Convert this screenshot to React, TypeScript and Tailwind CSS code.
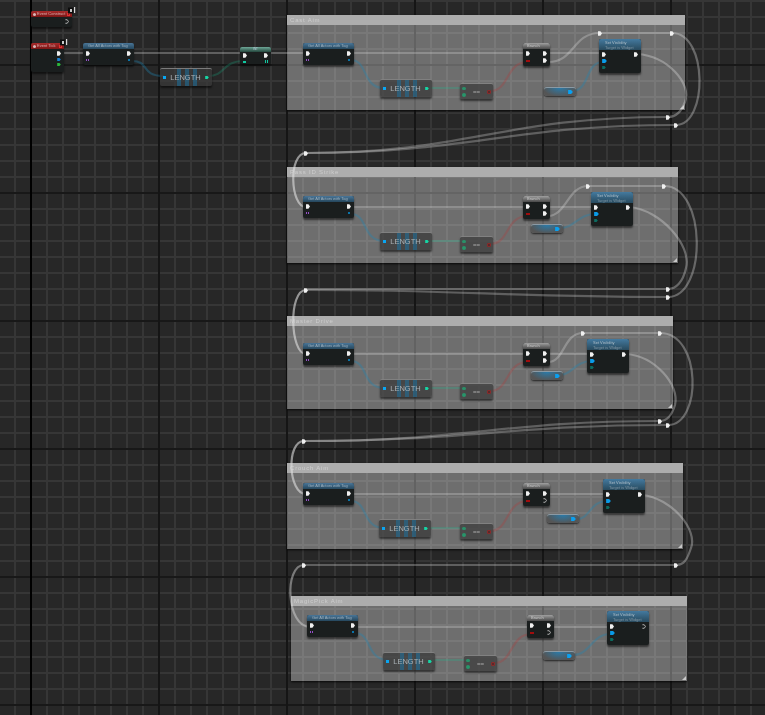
import React from "react";

const font = "font-['Liberation_Sans',Arial,sans-serif]";

function Exec({ hollow }: { hollow?: boolean }) {
  return (
    <svg width="4" height="5" viewBox="0 0 5 6" className="block shrink-0">
      {hollow ? (
        <path d="M0.5 0.8H2.8L4.3 3L2.8 5.2H0.5" fill="none" stroke="#cfcfcf" strokeWidth="1" />
      ) : (
        <path d="M0 0.3H3L5 3L3 5.7H0Z" fill="#f0f0f0" />
      )}
    </svg>
  );
}

function Arrow({ color, size = 5 }: { color: string; size?: number }) {
  return (
    <svg width={size + 1} height={size} viewBox="0 0 6 5" className="block shrink-0">
      <path d="M0 0H3.8L6 2.5L3.8 5H0Z" fill={color} />
    </svg>
  );
}

function Comment({ x, y, w, h, title }: { x: number; y: number; w: number; h: number; title: string }) {
  return (
    <div
      className={`absolute flex flex-col bg-white/[0.33] shadow-[0_1px_2px_rgba(0,0,0,0.8)] ${font}`}
      style={{ left: x, top: y, width: w, height: h }}
    >
      <div className="flex h-[10px] shrink-0 items-center bg-[#adadad] pl-[3px] text-[6px] leading-none tracking-[0.8px] text-[#cdcdcd]">
        {title}
      </div>
      <div className="absolute bottom-[1px] right-[1px] h-0 w-0 border-b-[4px] border-l-[4px] border-b-[#c8c8c8] border-l-transparent" />
    </div>
  );
}

function Box({ x, y, w, h, className, children }: { x: number; y: number; w: number; h: number; className: string; children?: React.ReactNode }) {
  return (
    <div className={`absolute overflow-hidden rounded-[2px] ${font} ${className}`} style={{ left: x, top: y, width: w, height: h }}>
      {children}
    </div>
  );
}

const dark = "bg-[#1a1e1e] shadow-[0_2px_2px_rgba(0,0,0,0.55)]";

function GetAll({ x, y }: { x: number; y: number }) {
  return (
    <Box x={x} y={y} w={51} h={22} className={dark}>
      <div className="flex h-[6px] items-center bg-gradient-to-b from-[#4a7698] to-[#25475d] pl-[5px] text-[4px] leading-none text-[#9fb2bf]">
        Get All Actors with Tag
      </div>
      <div className="flex items-center justify-between px-[3px] pt-[2px]">
        <Exec />
        <Exec />
      </div>
      <div className="flex items-center justify-between px-[3px] pt-[3px]">
        <div className="flex gap-[1px]">
          <div className="h-[2px] w-[1px] bg-[#9550c8]" />
          <div className="h-[2px] w-[1px] bg-[#9550c8]" />
        </div>
        <div className="mr-[1px] h-[2px] w-[2px] bg-[#0b73a8]" />
      </div>
    </Box>
  );
}

function Length({ x, y }: { x: number; y: number }) {
  return (
    <Box x={x} y={y} w={52} h={18} className="border-t border-t-[#9a9a9a]/70 bg-[#3a3a3a]/75 shadow-[0_2px_2px_rgba(0,0,0,0.55)]">
      <div className="absolute left-[17px] top-0 flex h-full gap-[4px]">
        <div className="h-full w-[4px] bg-[#1f6c96]/60" />
        <div className="h-full w-[4px] bg-[#1f6c96]/60" />
        <div className="h-full w-[4px] bg-[#1f6c96]/60" />
      </div>
      <div className="absolute inset-0 flex items-center justify-between px-[3px]">
        <div className="h-[3px] w-[3px] bg-[#0aa6f2]" />
        <div className="text-[7.5px] leading-none text-[#a9b1b5]">LENGTH</div>
        <Arrow color="#16d6a5" size={3} />
      </div>
    </Box>
  );
}

function Equal({ x, y }: { x: number; y: number }) {
  return (
    <Box x={x} y={y} w={33} h={16} className="border-t border-t-[#9a9a9a]/70 bg-[#404040]/80 shadow-[0_2px_2px_rgba(0,0,0,0.55)]">
      <div className="flex h-full items-center justify-between px-[2px]">
        <div className="flex flex-col gap-[3px]">
          <div className="h-[3px] w-[4px] rounded-full bg-[#2a8f68]" />
          <div className="h-[4px] w-[4px] rounded-full bg-[#28956a]" />
        </div>
        <div className="text-[6px] font-bold leading-none text-[#a8a8a8]">==</div>
        <div className="h-[4px] w-[4px] rounded-[1px] border border-[#8a2a2a] bg-[#5a2a2a]" />
      </div>
    </Box>
  );
}

function Branch({ x, y, hollow }: { x: number; y: number; hollow?: boolean }) {
  return (
    <Box x={x} y={y} w={27} h={23} className={dark}>
      <div className="flex h-[6px] items-center bg-gradient-to-b from-[#a0a0a0] to-[#4a4a4a] pl-[4px] text-[4px] leading-none text-[#c8c8c8]">
        Branch
      </div>
      <div className="flex items-center justify-between px-[3px] pt-[2px]">
        <Exec />
        <Exec />
      </div>
      <div className="flex items-center justify-between px-[3px] pt-[2px]">
        <div className="h-[2px] w-[4px] bg-[#a00d0d]" />
        <Exec hollow={hollow} />
      </div>
    </Box>
  );
}

function SetVis({ x, y, hollow }: { x: number; y: number; hollow?: boolean }) {
  return (
    <Box x={x} y={y} w={42} h={34} className={dark}>
      <div className="flex h-[11px] flex-col justify-center bg-gradient-to-b from-[#447a9f] to-[#284a5e] pl-[6px] text-[4px] leading-[5px] text-[#aebec8]">
        <div>Set Visibility</div>
        <div className="text-[#7f95a3]">Target is Widget</div>
      </div>
      <div className="flex items-center justify-between px-[3px] pt-[2px]">
        <Exec />
        <Exec hollow={hollow} />
      </div>
      <div className="px-[3px] pt-[2px]">
        <Arrow color="#0a9be8" size={4} />
      </div>
      <div className="px-[3px] pt-[3px]">
        <Arrow color="#0c6b60" size={3} />
      </div>
    </Box>
  );
}

function Var({ x, y }: { x: number; y: number }) {
  return (
    <Box x={x} y={y} w={32} h={9} className="rounded-[3px] border-t border-t-[#8a9aa5] bg-[radial-gradient(ellipse_at_50%_0%,#2b7aa8,#555_75%)] shadow-[0_1px_2px_rgba(0,0,0,0.7)]">
      <div className="flex h-full items-center justify-end pr-[3px]">
        <Arrow color="#0aa0f0" size={4} />
      </div>
    </Box>
  );
}

function Knot({ x, y }: { x: number; y: number }) {
  return (
    <div className="absolute" style={{ left: x - 2, top: y - 2.5 }}>
      <Exec />
    </div>
  );
}

function EventNode({ x, y, w, h, title, children }: { x: number; y: number; w: number; h: number; title: string; children: React.ReactNode }) {
  return (
    <>
      <Box x={x} y={y} w={w} h={h} className={dark}>
        <div className="flex h-[6px] items-center gap-[1px] bg-gradient-to-b from-[#a82a2a] to-[#7c1616] pl-[2px] text-[4px] leading-none text-[#d4b0b0]">
          <span className="h-[3px] w-[3px] rounded-full bg-[#d8b8b8]" />
          {title}
        </div>
        {children}
      </Box>
      <div className="absolute h-[3px] w-[3px] border-[0.7px] border-[#e03030]" style={{ left: x + w - 5, top: y + 2 }} />
      <svg className="absolute" width="8" height="7" viewBox="0 0 8 7" style={{ left: x + w - 4, top: y - 4 }}>
        <rect x="0" y="0.5" width="5" height="6" fill="#0c0c0c" />
        <rect x="6" y="0" width="1.2" height="6" fill="#d8d8d8" />
        <rect x="2" y="2" width="2" height="3" fill="#c8c8c8" />
      </svg>
    </>
  );
}

const white = "#e0e0e0";

type W = { d: string; c?: string; o?: number };

const blue = "#1f86b4";
const green = "#12c898";
const red = "#c03030";

const wires: W[] = [
  { d: "M62 53H83", o: 0.3 },
  { d: "M132 53H241", o: 0.3 },
  { d: "M270 53H304", o: 0.3 },
  { d: "M132 61C150 61 140 76 164 76", c: blue, o: 0.35 },
  { d: "M208 76C226 76 222 61 244 61", c: green, o: 0.22 },
  // section 1
  { d: "M352 53H526", o: 0.28 },
  { d: "M548 53H602", o: 0.28 },
  { d: "M548 62C575 62 572 33 600 33", o: 0.3 },
  { d: "M600 33H672", o: 0.3 },
  { d: "M672 33C708 33 708 125 676 125", o: 0.35 },
  { d: "M637 54C668 56 692 84 685 102C681 113 675 117 668 117", o: 0.35 },
  { d: "M668 117C500 117 470 153 306 153", o: 0.3 },
  { d: "M676 125C510 125 470 153 306 153", o: 0.3 },
  { d: "M306 153C288 153 290 207 306 207", o: 0.6 },
  { d: "M351 60C368 60 362 88 384 88", c: blue, o: 0.35 },
  { d: "M426 88H464", c: green, o: 0.22 },
  { d: "M490 91C510 91 505 62 528 62", c: red, o: 0.25 },
  { d: "M572 91C590 91 585 62 603 62", c: blue, o: 0.35 },
  // section 2
  { d: "M352 207H526", o: 0.28 },
  { d: "M548 207H595", o: 0.28 },
  { d: "M548 216C566 216 568 186 588 186", o: 0.3 },
  { d: "M588 186H664", o: 0.3 },
  { d: "M664 186C707 186 707 297 668 297", o: 0.35 },
  { d: "M630 207C660 210 692 245 686 268C683 282 676 289 668 289", o: 0.35 },
  { d: "M668 289H306", o: 0.3 },
  { d: "M668 297C500 297 470 290 306 290", o: 0.3 },
  { d: "M306 290C288 290 290 354 306 354", o: 0.6 },
  { d: "M351 214C368 214 362 241 384 241", c: blue, o: 0.35 },
  { d: "M426 241H464", c: green, o: 0.22 },
  { d: "M490 244C510 244 505 216 528 216", c: red, o: 0.25 },
  { d: "M560 228C575 228 578 214 596 214", c: blue, o: 0.35 },
  // section 3
  { d: "M352 354H526", o: 0.28 },
  { d: "M548 354H590", o: 0.28 },
  { d: "M548 362C565 362 563 333 583 333", o: 0.3 },
  { d: "M583 333H660", o: 0.3 },
  { d: "M660 333C702 333 702 425 668 425", o: 0.35 },
  { d: "M626 354C655 356 680 385 675 405C672 415 668 421 660 421", o: 0.35 },
  { d: "M660 421C500 421 470 441 304 441", o: 0.3 },
  { d: "M668 425C510 425 470 441 304 441", o: 0.3 },
  { d: "M304 441C286 441 288 494 306 494", o: 0.6 },
  { d: "M351 361C368 361 362 388 384 388", c: blue, o: 0.35 },
  { d: "M426 388H464", c: green, o: 0.22 },
  { d: "M490 391C510 391 505 362 528 362", c: red, o: 0.25 },
  { d: "M560 375C572 375 575 361 592 361", c: blue, o: 0.35 },
  // section 4
  { d: "M352 494H526", o: 0.28 },
  { d: "M548 494H606", o: 0.28 },
  { d: "M642 495C672 498 698 530 691 548C687 560 684 565 676 565", o: 0.35 },
  { d: "M676 565H304", o: 0.3 },
  { d: "M304 565C284 565 286 627 310 627", o: 0.45 },
  { d: "M351 501C368 501 362 528 384 528", c: blue, o: 0.35 },
  { d: "M426 528H464", c: green, o: 0.22 },
  { d: "M490 531C510 531 505 501 528 501", c: red, o: 0.25 },
  { d: "M577 519C590 519 590 501 607 501", c: blue, o: 0.35 },
  // section 5
  { d: "M356 627H530", o: 0.28 },
  { d: "M552 627H610", o: 0.28 },
  { d: "M355 633C372 633 366 660 388 660", c: blue, o: 0.35 },
  { d: "M430 660H468", c: green, o: 0.22 },
  { d: "M494 663C514 663 509 634 532 634", c: red, o: 0.25 },
  { d: "M573 655C590 655 592 634 610 634", c: blue, o: 0.35 },
];

const knots: [number, number][] = [
  [600, 33], [672, 33], [668, 117], [676, 125], [306, 153],
  [588, 186], [664, 186], [668, 289], [668, 297], [306, 290],
  [583, 333], [660, 333], [660, 421], [668, 425], [304, 441],
  [676, 565], [304, 565],
];

export default function App() {
  return (
    <div className="relative h-[715px] w-[765px] overflow-hidden bg-[#262626]">
      <div className="absolute inset-0 blur-[0.35px] bg-[#272727] bg-[linear-gradient(90deg,#151515_2px,transparent_2px),linear-gradient(0deg,#181818_2px,transparent_2px),linear-gradient(90deg,#363636_2px,transparent_2px),linear-gradient(0deg,#363636_2px,transparent_2px)] [background-position:158px_0,0_66px,14px_0,0_2px] [background-size:128px_128px,128px_128px,16px_16px,16px_16px]">
        <div className="absolute left-[30px] top-0 h-full w-[2px] bg-black" />

        <Comment x={287} y={15} w={398} h={95} title="Cast Aim" />
        <Comment x={287} y={167} w={391} h={96} title="Pass ID Strike" />
        <Comment x={287} y={316} w={386} h={93} title="Master Drive" />
        <Comment x={287} y={463} w={396} h={86} title="Crouch Aim" />
        <Comment x={291} y={596} w={396} h={85} title="MagicPick Aim" />

        <svg className="absolute left-0 top-0" width="765" height="715" viewBox="0 0 765 715" fill="none">
          {wires.map((w, i) => (
            <path key={i} d={w.d} stroke={w.c ?? white} strokeOpacity={w.o ?? 0.35} strokeWidth="2.2" />
          ))}
        </svg>

        <EventNode x={31} y={11} w={41} h={16} title="Event Construct">
          <div className="flex justify-end pr-[3px] pt-[2px]">
            <Exec hollow />
          </div>
        </EventNode>
        <EventNode x={31} y={43} w={33} h={29} title="Event Tick">
          <div className="flex flex-col items-end gap-[2px] pr-[3px] pt-[2px]">
            <Exec />
            <Arrow color="#1a7fd0" size={3} />
            <Arrow color="#2ab83a" size={3} />
          </div>
        </EventNode>
        <GetAll x={83} y={43} />
        <Length x={160} y={68} />
        <Box x={240} y={47} w={31} h={17} className={dark}>
          <div className="flex h-[5px] items-center justify-center bg-gradient-to-b from-[#6fa898] to-[#24483e] text-[3px] leading-none text-[#bcd]">
            INT
          </div>
          <div className="flex items-center justify-between px-[3px] pt-[1px]">
            <Exec />
            <Exec />
          </div>
          <div className="flex items-center justify-between px-[3px] pt-[2px]">
            <div className="h-[2px] w-[3px] bg-[#10c8a0]" />
            <div className="flex gap-[1px]">
              <div className="h-[3px] w-[1px] bg-[#10c8a0]" />
              <div className="h-[3px] w-[1px] bg-[#10c8a0]" />
            </div>
          </div>
        </Box>

        <GetAll x={303} y={43} />
        <Length x={380} y={79} />
        <Equal x={460} y={83} />
        <Branch x={523} y={43} />
        <SetVis x={599} y={39} />
        <Var x={544} y={87} />

        <GetAll x={303} y={196} />
        <Length x={380} y={232} />
        <Equal x={460} y={236} />
        <Branch x={523} y={196} />
        <SetVis x={591} y={192} />
        <Var x={531} y={224} />

        <GetAll x={303} y={343} />
        <Length x={380} y={379} />
        <Equal x={460} y={383} />
        <Branch x={523} y={343} />
        <SetVis x={587} y={339} />
        <Var x={531} y={371} />

        <GetAll x={303} y={483} />
        <Length x={379} y={519} />
        <Equal x={460} y={523} />
        <Branch x={523} y={483} hollow />
        <SetVis x={603} y={479} />
        <Var x={547} y={514} />

        <GetAll x={307} y={615} />
        <Length x={383} y={652} />
        <Equal x={464} y={655} />
        <Branch x={527} y={615} hollow />
        <SetVis x={607} y={611} hollow />
        <Var x={543} y={651} />

        {knots.map(([x, y], i) => (
          <Knot key={i} x={x} y={y} />
        ))}
      </div>
    </div>
  );
}
